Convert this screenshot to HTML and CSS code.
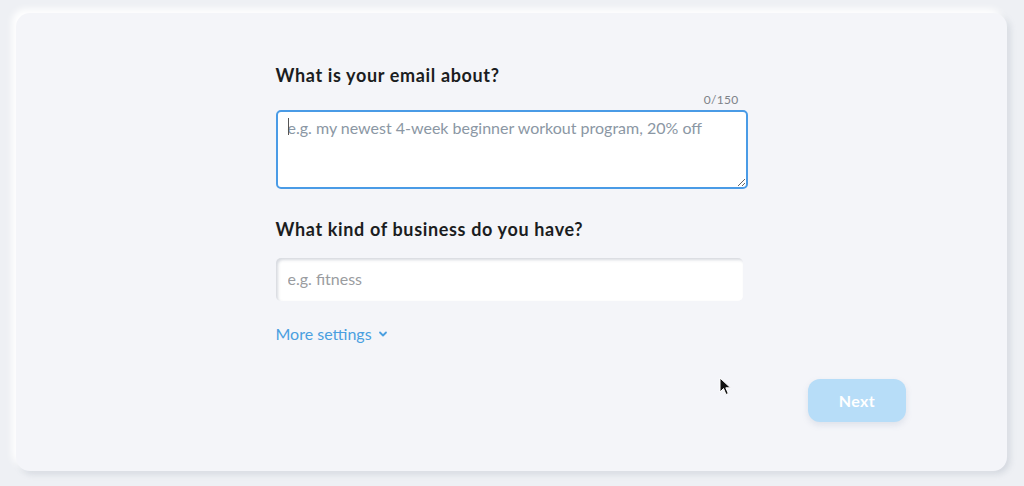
FILE: index.html
```html
<!DOCTYPE html>
<html>
<head>
<meta charset="utf-8">
<link rel="stylesheet" href="styles.css">
</head>
<body>
<div class="card">
  <div class="form">
    <h2 class="label">What is your email about?</h2>
    <div class="counter">0/150</div>
    <div class="textarea-wrap">
      <textarea class="textarea" placeholder="e.g. my newest 4-week beginner workout program, 20% off"></textarea>
      <span class="caret"></span>
    </div>
    <h2 class="label label-2">What kind of business do you have?</h2>
    <input class="input" type="text" placeholder="e.g. fitness">
    <a class="more" href="#">More settings
      <svg class="chev" width="10" height="8" viewBox="0 0 10 8"><path d="M2 2.5 L5 5.5 L8 2.5" fill="none" stroke="#4a9fe0" stroke-width="1.8" stroke-linecap="round" stroke-linejoin="round"/></svg>
    </a>
  </div>
  <div class="footer">
    <button class="next">Next</button>
  </div>
</div>
<svg class="cursor" width="14" height="20" viewBox="0 0 14 20"><path d="M1 1 L1 15 L4.5 11.5 L7 17.5 L9.3 16.5 L6.8 10.8 L11.5 10.8 Z" fill="#111" stroke="#fff" stroke-width="1"/></svg>
</body>
</html>
```
FILE: styles.css
```css
* { box-sizing: border-box; }
html, body { margin: 0; padding: 0; }
body {
  background: #eef0f4;
  font-family: "Lato", "Noto Sans", sans-serif;
  width: 1024px;
  height: 486px;
  overflow: hidden;
  padding: 13px 17px 15px 16px;
}
.card {
  height: 458px;
  background: #f4f5f9;
  border-radius: 14px;
  box-shadow: -4px -4px 7px #ffffff, 3px 3px 6px rgba(120, 130, 150, 0.22);
  display: flex;
  flex-direction: column;
  padding-top: 50px;
}
.form {
  width: 472px;
  margin: 0 auto;
  display: flex;
  flex-direction: column;
}
.label {
  margin: 0;
  font-size: 18px;
  line-height: 24px;
  font-weight: 700;
  color: #1b1d21;
  letter-spacing: 0.65px;
}
.counter {
  margin-top: 6px;
  text-align: right;
  padding-right: 9px;
  font-size: 12px;
  line-height: 14px;
  color: #7d8288;
  letter-spacing: 0.3px;
}
.textarea-wrap { position: relative; margin-top: 3px; }
.textarea {
  display: block;
  width: 472px;
  height: 79px;
  border: 2px solid #4a9be6;
  border-radius: 5px;
  background: #fff;
  padding: 5px 10px;
  font-family: inherit;
  font-size: 16px;
  line-height: 22px;
  color: #333;
  outline: none;
  resize: vertical;
}
.textarea::placeholder { color: #8b97a4; }
.caret {
  position: absolute;
  left: 12px;
  top: 8px;
  width: 1px;
  height: 17px;
  background: #555;
}
.label-2 { margin-top: 28px; }
.input {
  margin-top: 17px;
  width: 467px;
  height: 43px;
  border: none;
  border-radius: 5px;
  background: #fff;
  box-shadow: inset 2px 2px 3px rgba(120, 130, 150, 0.3);
  padding: 0 12px 2px;
  font-family: inherit;
  font-size: 16px;
  color: #333;
  outline: none;
}
.input::placeholder { color: #9a9ca0; }
.more {
  margin-top: 23px;
  align-self: flex-start;
  color: #4a9fe0;
  font-size: 16px;
  line-height: 20px;
  text-decoration: none;
  display: flex;
  align-items: center;
  gap: 6px;
}
.footer {
  display: flex;
  justify-content: flex-end;
  padding-right: 101px;
  margin-top: 35px;
}
.next {
  width: 98px;
  height: 43px;
  border: none;
  border-radius: 12px;
  background: #b7ddf8;
  color: #fff;
  font-family: inherit;
  font-weight: 700;
  font-size: 16px;
  letter-spacing: 0.4px;
  box-shadow: 0 3px 6px rgba(120, 140, 170, 0.18);
}
.cursor {
  position: absolute;
  left: 719px;
  top: 377px;
}
```
